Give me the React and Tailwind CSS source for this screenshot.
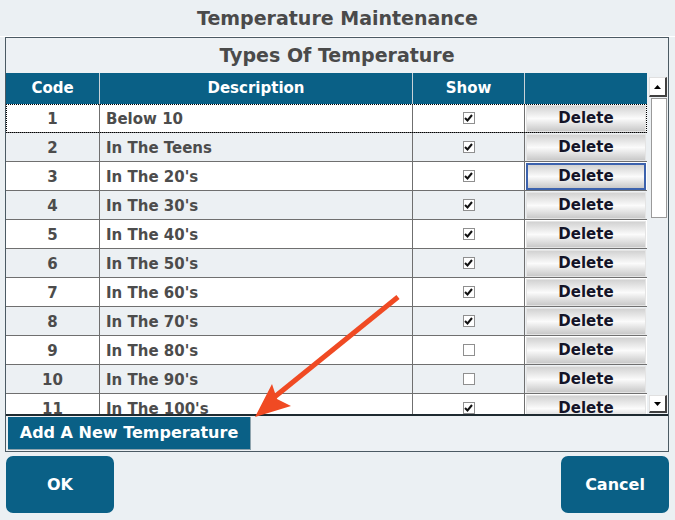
import { useState } from "react"

const rows = [
  { code: 1, desc: "Below 10", show: true },
  { code: 2, desc: "In The Teens", show: true },
  { code: 3, desc: "In The 20's", show: true },
  { code: 4, desc: "In The 30's", show: true },
  { code: 5, desc: "In The 40's", show: true },
  { code: 6, desc: "In The 50's", show: true },
  { code: 7, desc: "In The 60's", show: true },
  { code: 8, desc: "In The 70's", show: true },
  { code: 9, desc: "In The 80's", show: false },
  { code: 10, desc: "In The 90's", show: false },
  { code: 11, desc: "In The 100's", show: true },
]

const cols = "grid grid-cols-[94px_313px_112px_122px]"

function Check({ on }) {
  return (
    <div className="w-[12px] h-[12px] border border-[#8f8f8f] bg-white flex items-center justify-center">
      {on && (
        <svg width="9" height="8" viewBox="0 0 9 8">
          <path d="M1 4 L3.5 6.5 L8 1" stroke="#111" strokeWidth="2" fill="none" />
        </svg>
      )}
    </div>
  )
}

function DeleteButton({ focused }) {
  return (
    <div
      className={`flex-1 mx-[1px] h-[27px] pt-[1px] flex items-center justify-center text-[15px] font-bold text-[#141428] bg-gradient-to-b from-[#d2d2d2] via-[#fbfbfb] to-[#c9c9c9] ${
        focused ? "border-2 border-[#3c62ad]" : "border border-[#e4e4e4]"
      }`}
    >
      Delete
    </div>
  )
}

function Row({ row, index }) {
  const even = index % 2 === 1
  return (
    <div
      className={`${cols} h-[29px] border-b border-[#6f6f6f] ${even ? "bg-[#ecf0f3]" : "bg-white"} ${
        index === 0 ? "outline-1 outline-dotted outline-black -outline-offset-1" : ""
      }`}
    >
      <div className="border-r border-[#6f6f6f] pt-[2px] flex items-center justify-center text-[15px] font-bold text-[#4c4c4c]">
        {row.code}
      </div>
      <div className="border-r border-[#6f6f6f] pt-[2px] flex items-center pl-[6px] text-[15px] font-bold text-[#4c4c4c]">
        {row.desc}
      </div>
      <div className="border-r border-[#6f6f6f] flex items-center justify-center">
        <Check on={row.show} />
      </div>
      <div className="flex items-center">
        <DeleteButton focused={index === 2} />
      </div>
    </div>
  )
}

function ScrollBar() {
  return (
    <div className="w-[21px] bg-[#ecf0f3] flex flex-col items-end pt-[4px] pr-[1px]">
      <div className="w-[18px] h-[20px] bg-white border-r-2 border-b-2 border-[#404040] border-t border-l border-t-[#e0e0e0] border-l-[#e0e0e0] flex items-center justify-center">
        <svg width="7" height="4" viewBox="0 0 7 4"><path d="M0 4 L3.5 0 L7 4 Z" fill="#000" /></svg>
      </div>
      <div className="w-[16px] h-[120px] bg-white border border-[#9a9a9a] mt-[1px]" />
      <div className="flex-1" />
      <div className="w-[18px] h-[18px] bg-white border-r-2 border-b-2 border-[#404040] border-t border-l border-t-[#e0e0e0] border-l-[#e0e0e0] flex items-center justify-center mb-[1px]">
        <svg width="7" height="4" viewBox="0 0 7 4"><path d="M0 0 L3.5 4 L7 0 Z" fill="#000" /></svg>
      </div>
    </div>
  )
}

export default function App() {
  const [items] = useState(rows)

  return (
    <div
      className="relative w-[675px] h-[520px] bg-[#ebf0f3] overflow-hidden"
      style={{ fontFamily: "'DejaVu Sans', Verdana, sans-serif" }}
    >
      <div className="h-[37px] flex items-center justify-center text-[19px] font-bold text-[#4a4a4a] border-b border-white">
        Temperature Maintenance
      </div>

      <div className="ml-[5px] w-[664px] border border-[#4b5a63] bg-[#edf1f4]">
        <div className="h-[35px] flex items-center justify-center text-[19px] font-bold text-[#4a4a4a]">
          Types Of Temperature
        </div>

        <div className="flex h-[343px] border-b-2 border-[#1e2a30]">
          <div className="w-[641px] overflow-hidden">
            <div className={`${cols} h-[31px] bg-[#0a6086] text-white text-[15px] font-bold`}>
              <div className="border-r border-[#c8d2d8] flex items-center justify-center">Code</div>
              <div className="border-r border-[#c8d2d8] flex items-center justify-center">Description</div>
              <div className="border-r border-[#c8d2d8] flex items-center justify-center">Show</div>
              <div />
            </div>
            {items.map((row, i) => (
              <Row key={row.code} row={row} index={i} />
            ))}
          </div>
          <ScrollBar />
        </div>

        <div className="h-[35px] pt-[1px] pl-[2px]">
          <button className="h-[33px] w-[243px] bg-[#0a6086] border-r border-b border-[#8fa4ae] text-white text-[16px] font-bold flex items-center justify-center">
            Add A New Temperature
          </button>
        </div>
      </div>

      <div className="flex justify-between px-[6px] mt-[4px]">
        <button className="w-[108px] h-[57px] rounded-[7px] bg-[#0a6086] text-white text-[16px] font-bold">OK</button>
        <button className="w-[108px] h-[57px] rounded-[7px] bg-[#0a6086] text-white text-[16px] font-bold">Cancel</button>
      </div>

      <svg className="absolute left-0 top-0 pointer-events-none" width="675" height="520">
        <line x1="398" y1="297" x2="272" y2="399" stroke="#f04a23" strokeWidth="5" strokeLinecap="butt" />
        <path d="M255 417 L272 384 L277 399 L291 406 Z" fill="#f04a23" />
      </svg>
    </div>
  )
}
